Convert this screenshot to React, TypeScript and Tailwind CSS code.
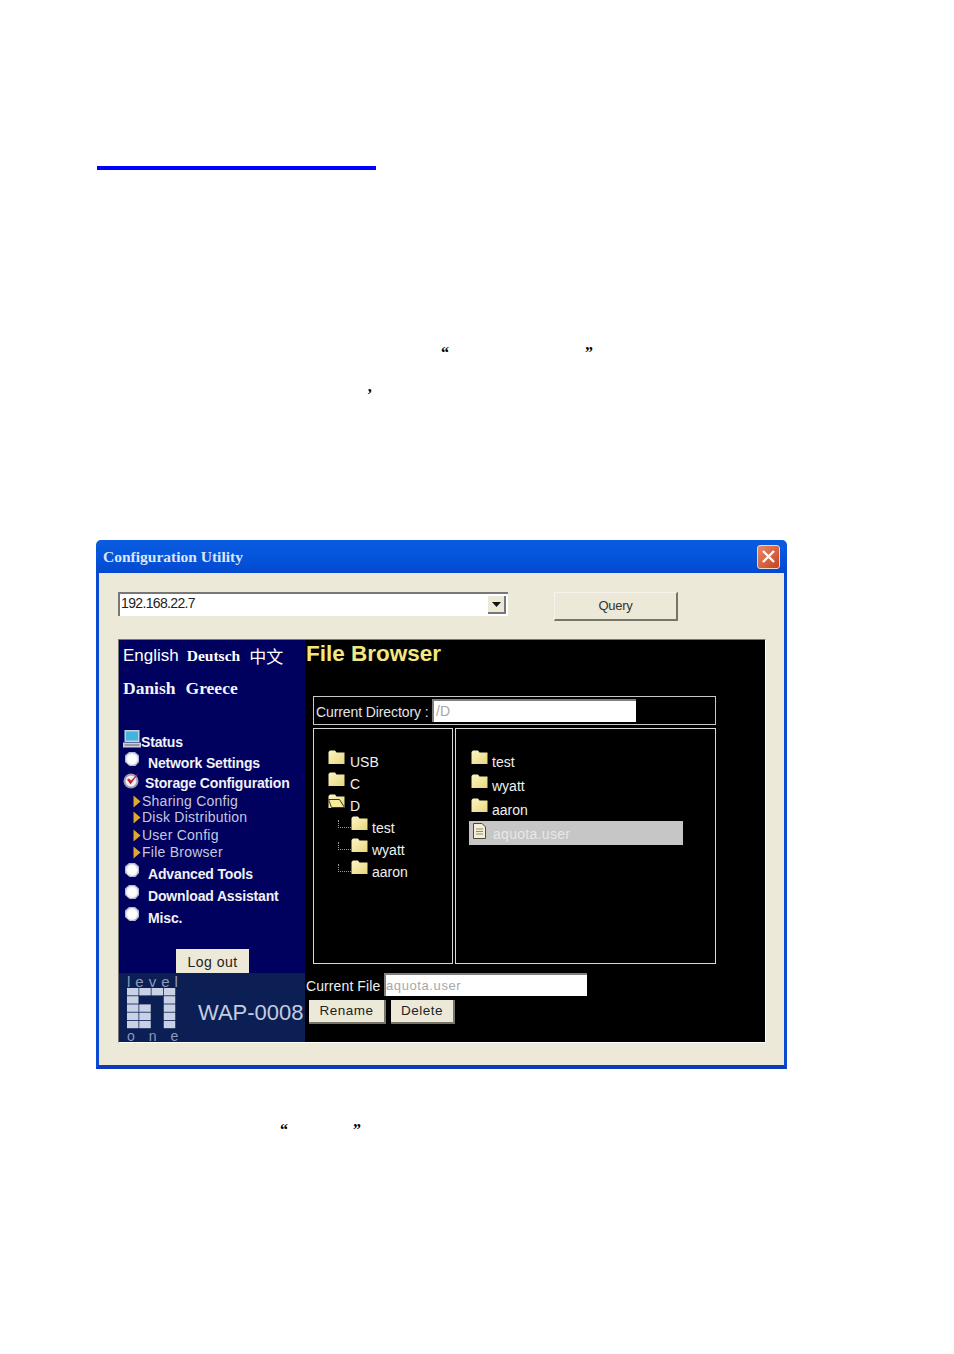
import { type ReactNode } from "react";

const sans = "font-['Liberation_Sans',Arial,sans-serif]";

function Folder({ open = false }: { open?: boolean }) {
  return (
    <svg width="17" height="14" viewBox="0 0 17 14" className="shrink-0">
      <defs>
        <linearGradient id="folderFill" x1="0" y1="0" x2="1" y2="1">
          <stop offset="0" stopColor="#fdf6c6" />
          <stop offset="1" stopColor="#e8d67c" />
        </linearGradient>
      </defs>
      <path d="M0.500 14V2L2 0.500H7L8.500 2.500H16.500V14z" fill="url(#folderFill)" />
      {open && <path d="M0.500 5.500h11l5 8H3.500z" fill="#f7ec9c" stroke="#3a3520" strokeWidth="1" />}
    </svg>
  );
}

function Ball() {
  return (
    <svg width="18" height="18" viewBox="0 0 18 18" className="shrink-0">
      <path d="M6 1h6l4 3.500V11l-3.500 4h-6L2 11V4.500z" fill="#b4b8d0" />
      <circle cx="9" cy="8" r="6" fill="#f2f2f6" />
      <circle cx="9" cy="8" r="4.500" fill="#ffffff" />
    </svg>
  );
}

function CheckBall() {
  return (
    <svg width="18" height="18" viewBox="0 0 18 18" className="shrink-0">
      <circle cx="8" cy="10" r="7.500" fill="#9a9cb4" />
      <circle cx="8" cy="10" r="5.500" fill="#f0f0f4" />
      <path d="M4 8.500l3.500 5L16.500 1 8 9.500 6 7.500z" fill="#c8202c" />
    </svg>
  );
}

function Monitor() {
  return (
    <svg width="18" height="18" viewBox="0 0 18 18" className="shrink-0">
      <rect x="1.500" y="0" width="15" height="12" fill="#c8cede" />
      <rect x="3" y="1.500" width="12" height="9" fill="#3fb4dc" />
      <rect x="0" y="12.500" width="18" height="5" fill="#cdd0d8" />
      <rect x="1.500" y="14.500" width="15" height="1" fill="#5a6080" />
    </svg>
  );
}

function Arrow() {
  return (
    <svg width="8" height="13" viewBox="0 0 8 13" className="shrink-0">
      <path d="M0.500 0.500L7.500 6.500L0.500 12.500z" fill="#e0a830" />
    </svg>
  );
}

function LogoGrid() {
  const dark = ["1-1", "1-2", "2-2", "3-2", "4-2"];
  const cells = [];
  for (let r = 0; r < 5; r++) {
    for (let c = 0; c < 4; c++) {
      if (dark.includes(`${r}-${c}`)) continue;
      cells.push(<rect key={`${r}-${c}`} x={c * 12.25} y={r * 8.2} width="11.5" height="7.4" fill="#c9d2e4" />);
    }
  }
  return (
    <svg width="49" height="41" viewBox="0 0 49 41" className="block">
      {cells}
    </svg>
  );
}

function MenuRow({ icon, h, gap, children }: { icon: ReactNode; h: string; gap: string; children: ReactNode }) {
  return (
    <div className={`flex items-center pl-[4px] text-[14px] font-bold tracking-[-0.15px] text-[#f2f2f8] ${h}`}>
      <span className="-mt-[7px] flex">{icon}</span>
      <span className={`whitespace-nowrap ${gap}`}>{children}</span>
    </div>
  );
}

function SubRow({ h, children }: { h: string; children: ReactNode }) {
  return (
    <div className={`flex items-center pl-[14px] text-[14px] tracking-[0.25px] text-[#c6c8dc] ${h}`}>
      <Arrow />
      <span className="ml-[1px] whitespace-nowrap">{children}</span>
    </div>
  );
}

function TreeRow({ name, child = false, open = false }: { name: string; child?: boolean; open?: boolean }) {
  return (
    <div className={`flex h-[22px] items-center text-[14px] text-[#f0f0f0] ${child ? "pl-[24px]" : "pl-[14px]"}`}>
      {child && <span className="-mt-[8px] h-[8px] w-[13px] border-b border-l border-dotted border-[#9a9a9a]" />}
      <span className="-mt-[10px] flex">
        <Folder open={open} />
      </span>
      <span className={child ? "ml-[4px]" : "ml-[5px]"}>{name}</span>
    </div>
  );
}

function ListRow({ name, h }: { name: string; h: string }) {
  return (
    <div className={`flex items-center pl-[2px] text-[14px] text-[#f0f0f0] ${h}`}>
      <span className="-mt-[10px] flex">
        <Folder />
      </span>
      <span className="ml-[4px] mt-[1px]">{name}</span>
    </div>
  );
}

function GrayButton({ w, children }: { w: string; children: ReactNode }) {
  return (
    <div
      className={`flex h-[24px] items-center justify-center border-b-2 border-r-2 border-b-[#77756a] border-r-[#77756a] bg-[#ece9d8] text-[13.500px] tracking-[0.5px] text-[#222222] ${w}`}
    >
      {children}
    </div>
  );
}

function Sidebar() {
  return (
    <div className="flex w-[186px] shrink-0 flex-col bg-[#00005f]">
      <div className="flex h-[31px] items-center pl-[4px] text-white">
        <span className={`${sans} text-[17px]`}>English</span>
        <span className="ml-[8px] font-['Liberation_Serif',serif] text-[15.500px] font-bold">Deutsch</span>
        <span className="ml-[9px] font-['Noto_Sans_CJK_SC',sans-serif] text-[17px] font-normal leading-none">中文</span>
      </div>
      <div className="mt-[1px] flex h-[32px] items-center pl-[4px] font-['Liberation_Serif',serif] text-[17.500px] font-bold text-[#f4f4f4]">
        <span>Danish</span>
        <span className="ml-[10px]">Greece</span>
      </div>
      <div className="mt-[27px] flex flex-col">
        <MenuRow icon={<Monitor />} h="h-[22px]" gap="ml-0">
          Status
        </MenuRow>
        <MenuRow icon={<Ball />} h="h-[21px]" gap="ml-[7px]">
          Network Settings
        </MenuRow>
        <MenuRow icon={<CheckBall />} h="h-[19px]" gap="ml-[4px]">
          Storage Configuration
        </MenuRow>
        <SubRow h="h-[16px]">Sharing Config</SubRow>
        <SubRow h="h-[17px]">Disk Distribution</SubRow>
        <SubRow h="h-[18px]">User Config</SubRow>
        <SubRow h="h-[17px]">File Browser</SubRow>
        <div className="mt-[2px] flex flex-col">
          <MenuRow icon={<Ball />} h="h-[22px]" gap="ml-[7px]">
            Advanced Tools
          </MenuRow>
          <MenuRow icon={<Ball />} h="h-[22px]" gap="ml-[7px]">
            Download Assistant
          </MenuRow>
          <MenuRow icon={<Ball />} h="h-[22px]" gap="ml-[7px]">
            Misc.
          </MenuRow>
        </div>
      </div>
      <div className="ml-[57px] mt-[20px] flex h-[24px] w-[73px] items-center justify-center bg-[#ece9d8] pt-[3px] text-[14px] tracking-[0.5px] text-[#222222]">
        Log out
      </div>
      <div className="flex h-[69px] bg-[#0b1f54]">
        <div className="ml-[8px] flex w-[50px] shrink-0 flex-col items-start">
          <span className="h-[15px] whitespace-nowrap text-[15px] leading-[18px] tracking-[5px] text-[#8f9ab8]">level</span>
          <LogoGrid />
          <span className="mt-[1px] whitespace-nowrap text-[14px] leading-[12px] tracking-[14px] text-[#8f9ab8]">one</span>
        </div>
        <span className="ml-[21px] mt-[28px] whitespace-nowrap text-[22px] leading-[24px] text-[#c4cce0]">WAP-0008</span>
      </div>
    </div>
  );
}

function FileBrowser() {
  return (
    <div className="flex flex-1 flex-col bg-black">
      <div className="h-[28px] pl-[1px] text-[22.500px] font-bold leading-[28px] text-[#f3e77f]">File Browser</div>
      <div className="ml-[8px] mt-[28px] flex h-[29px] w-[403px] items-center border border-[#c8c8c8] pl-[2px] text-[14px] text-[#e4e4e4]">
        <span className="mt-[3px] w-[116px] shrink-0 whitespace-nowrap tracking-[-0.1px]">Current Directory :</span>
        <div className="flex h-[23px] w-[204px] items-center border-l-2 border-t-2 border-l-[#808080] border-t-[#808080] bg-white pl-[2px] text-[#a8a8a8]">
          /D
        </div>
      </div>
      <div className="ml-[8px] mt-[3px] flex h-[236px] w-[403px] gap-[2px]">
        <div className="w-[140px] border border-[#d8d8d8] pt-[22px]">
          <TreeRow name="USB" />
          <TreeRow name="C" />
          <TreeRow name="D" open />
          <TreeRow name="test" child />
          <TreeRow name="wyatt" child />
          <TreeRow name="aaron" child />
        </div>
        <div className="flex-1 border border-[#d8d8d8] pl-[13px] pt-[21px]">
          <ListRow name="test" h="h-[24px]" />
          <ListRow name="wyatt" h="h-[24px]" />
          <ListRow name="aaron" h="h-[23px]" />
          <div className="flex h-[24px] w-[214px] items-center bg-[#c6c6c6] pl-[3px] text-[14px] tracking-[0.3px] text-[#e8e8e8]">
            <svg width="15" height="16" viewBox="0 0 15 16" className="-mt-[5px] shrink-0">
              <path d="M1.500 0.500H10L13.500 4V15.500H1.500z" fill="#f4f0d8" stroke="#4a4a40" />
              <path d="M4 6h7M4 8.500h7M4 11h7" stroke="#8a8a7a" />
            </svg>
            <span className="ml-[6px] mt-[3px]">aquota.user</span>
          </div>
        </div>
      </div>
      <div className="ml-[1px] mt-[9px] flex h-[23px] items-center text-[14px] tracking-[0.1px] text-[#eeeeee]">
        <span className="mt-[3px] w-[78px] shrink-0 whitespace-nowrap">Current File</span>
        <div className="flex h-[23px] w-[203px] items-center border-l-2 border-t-2 border-l-[#808080] border-t-[#808080] bg-white text-[13px] tracking-[0.6px] text-[#a8a8a8]">
          aquota.user
        </div>
      </div>
      <div className="ml-[4px] mt-[4px] flex gap-[5px]">
        <GrayButton w="w-[77px]">Rename</GrayButton>
        <GrayButton w="w-[64px]">Delete</GrayButton>
      </div>
    </div>
  );
}

function ConfigWindow() {
  return (
    <div className={`flex h-[529px] w-[691px] -ml-[1px] flex-col font-normal ${sans}`}>
      <div className="flex h-[33px] shrink-0 items-center justify-between rounded-t-[5px] bg-gradient-to-b from-[#0a5ce0] via-[#0654dc] to-[#0349cf] pl-[7px] pr-[7px]">
        <span className="pt-[1px] font-['Liberation_Serif',serif] text-[15.500px] font-bold text-[#dfe6f4]">Configuration Utility</span>
        <div className="flex h-[24px] w-[23px] items-center justify-center rounded-[3px] border border-[#e8d8d0] bg-gradient-to-br from-[#e8896a] to-[#c5401c]">
          <svg width="15" height="15" viewBox="0 0 15 15">
            <path d="M2 2l11 11M13 2L2 13" stroke="#ffffff" strokeWidth="2.400" />
          </svg>
        </div>
      </div>
      <div className="flex flex-1 flex-col border-x-[3px] border-b-[4px] border-x-[#0a4ad0] border-b-[#0b3bb8] bg-[#ece9d8] pl-[19px] pt-[19px]">
        <div className="flex items-start">
          <div className="flex h-[24px] w-[390px] items-center justify-between border-l-2 border-t-2 border-l-[#777777] border-t-[#777777] bg-white pl-[1px] pr-[2px] text-[14px] tracking-[-0.65px] text-[#222222]">
            <span className="-mt-[3px]">192.168.22.7</span>
            <div className="flex h-[18px] w-[18px] items-center justify-center border-b-2 border-r-2 border-b-[#777777] border-r-[#777777] bg-[#ece9d8]">
              <svg width="9" height="5" viewBox="0 0 9 5">
                <path d="M0 0h9L4.500 5z" fill="#111111" />
              </svg>
            </div>
          </div>
          <div className="ml-[46px] flex h-[29px] w-[124px] items-center justify-center border-b-2 border-l border-r-2 border-t border-b-[#77756a] border-l-[#f6f4ea] border-r-[#77756a] border-t-[#f6f4ea] text-[13px] tracking-[-0.3px] text-[#333333]">
            Query
          </div>
        </div>
        <div className="mt-[18px] flex h-[404px] w-[648px] border border-b-white border-l-[#777777] border-r-white border-t-[#777777]">
          <Sidebar />
          <FileBrowser />
        </div>
      </div>
    </div>
  );
}

export default function App() {
  return (
    <div className="h-[1354px] w-[954px] bg-white pl-[97px] font-['Liberation_Serif',serif] text-[16px] font-bold text-black">
      <div className="h-[166px]" />
      <div className="h-[4px] w-[279px] bg-[#0000ff]" />
      <div className="mt-[169px] flex h-[20px] items-center pl-[344px] pt-[7px]">
        <span>“</span>
        <span className="ml-[136px]">”</span>
      </div>
      <div className="mt-[20px] flex h-[20px] items-center pl-[270px] pt-[11px]">
        <span>’</span>
      </div>
      <div className="mt-[141px]">
        <ConfigWindow />
      </div>
      <div className="mt-[48px] flex h-[20px] items-center pl-[183px] pt-[5px]">
        <span>“</span>
        <span className="ml-[65px]">”</span>
      </div>
    </div>
  );
}
